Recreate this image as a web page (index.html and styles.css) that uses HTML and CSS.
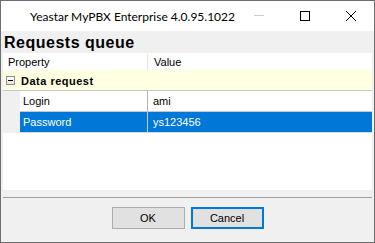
FILE: index.html
```html
<!DOCTYPE html>
<html lang="en">
<head>
	<meta charset="UTF-8">
	<title>Yeastar MyPBX Enterprise 4.0.95.1022</title>
	<link rel="stylesheet" href="styles.css">
</head>
<body>

	<div class="window">
		<div class="titlebar">
			<span class="title">Yeastar MyPBX Enterprise 4.0.95.1022</span>
			<div class="caption-btn">
				<svg width="10" height="10" viewBox="0 0 10 10"><path d="M0 4.5H10" stroke="#cccccc" stroke-width="1"/></svg>
			</div>
			<div class="caption-btn">
				<svg width="10" height="10" viewBox="0 0 10 10"><rect x="0.5" y="0.5" width="9" height="9" fill="none" stroke="#000" stroke-width="1"/></svg>
			</div>
			<div class="caption-btn">
				<svg width="10" height="10" viewBox="0 0 10 10"><path d="M0 0L10 10M10 0L0 10" stroke="#000" stroke-width="1"/></svg>
			</div>
		</div>

		<div class="content">
			<div class="heading">Requests queue</div>

			<div class="grid">
				<div class="grid-head">
					<div class="head-name">Property</div>
					<div class="head-value">Value</div>
				</div>

				<div class="category">
					<span class="toggle"></span>
					<span>Data request</span>
				</div>

				<div class="row">
					<div class="gutter"></div>
					<div class="cell name">Login</div>
					<div class="cell value">ami</div>
				</div>
				<div class="row selected">
					<div class="gutter"></div>
					<div class="cell name">Password</div>
					<div class="cell value">ys123456</div>
				</div>
			</div>

			<div class="separator"></div>

			<div class="buttons">
				<button type="button" class="btn">OK</button>
				<button type="button" class="btn btn-default">Cancel</button>
			</div>
		</div>
	</div>

</body>
</html>
```

FILE: styles.css
```css
:root{
	font-family: "Liberation Sans", Arial, sans-serif;
}

body{
	margin: 0;
	background-color: #f0f0f0;
}

.window{
	display: flex;
	flex-direction: column;
	width: 375px;
	height: 243px;
	box-sizing: border-box;
	border: 1px solid #6e6e6e;
	background-color: #f0f0f0;
}

/* title bar */

.titlebar{
	display: flex;
	align-items: center;
	height: 30px;
	background-color: #fff;
}

.title{
	flex: 1;
	padding-left: 29px;
	font-family: Lato, "Liberation Sans", sans-serif;
	font-size: 12px;
	color: #000;
}

.caption-btn{
	display: flex;
	align-items: center;
	justify-content: center;
	width: 46px;
	height: 30px;
}

/* content */

.content{
	display: flex;
	flex-direction: column;
	flex: 1;
}

.heading{
	padding: 2px 0 0 3px;
	line-height: 20px;
	font-size: 16px;
	font-weight: bold;
	letter-spacing: 0.5px;
}

.grid{
	display: flex;
	flex-direction: column;
	height: 137px;
	margin: 0 2px;
	background-color: #fff;
	font-size: 11px;
}

.grid-head{
	display: flex;
	height: 17px;
	padding-top: 1px;
	box-sizing: border-box;
	line-height: 16px;
}

.head-name{
	width: 145px;
	padding-left: 5px;
	box-sizing: border-box;
	border-right: 1px solid #e5e5e5;
}

.head-value{
	padding-left: 6px;
}

.category{
	display: flex;
	align-items: center;
	height: 21px;
	box-sizing: border-box;
	padding-top: 1px;
	border-bottom: 1px solid #c8c8c8;
	background-color: #ffffe1;
	font-weight: bold;
	letter-spacing: 0.5px;
}

.toggle{
	position: relative;
	width: 9px;
	height: 9px;
	margin: 0 6px 0 3px;
	border: 1px solid #8f8f8f;
	box-sizing: border-box;
	background: linear-gradient(#fff, #e4e4e4);
}

.toggle::after{
	content: "";
	position: absolute;
	left: 1px;
	top: 3px;
	width: 5px;
	height: 1px;
	background-color: #000;
}

.row{
	display: flex;
	height: 21px;
}

.gutter{
	width: 17px;
	background-color: #f0f0f0;
}

.cell{
	height: 21px;
	box-sizing: border-box;
	padding-top: 1px;
	line-height: 19px;
	border-bottom: 1px solid #c8c8c8;
}

.name{
	width: 128px;
	padding-left: 3px;
	border-right: 1px solid #b4b4b4;
}

.value{
	flex: 1;
	padding-left: 5px;
}

.selected .cell{
	background-color: #0078d7;
	color: #fff;
	border-bottom-color: #d9d9d9;
}

.selected .name{
	border-right-color: #c8c8c8;
}

.separator{
	height: 1px;
	margin: 7px 2px 0;
	background-color: #a0a0a0;
}

.buttons{
	display: flex;
	justify-content: center;
	gap: 6px;
	margin-top: 9px;
}

.btn{
	width: 73px;
	height: 22px;
	padding: 0;
	box-sizing: border-box;
	border: 1px solid #adadad;
	background-color: #e1e1e1;
	font-family: "Liberation Sans", Arial, sans-serif;
	font-size: 11px;
	color: #000;
}

.btn-default{
	border: 2px solid #0078d7;
}
```
